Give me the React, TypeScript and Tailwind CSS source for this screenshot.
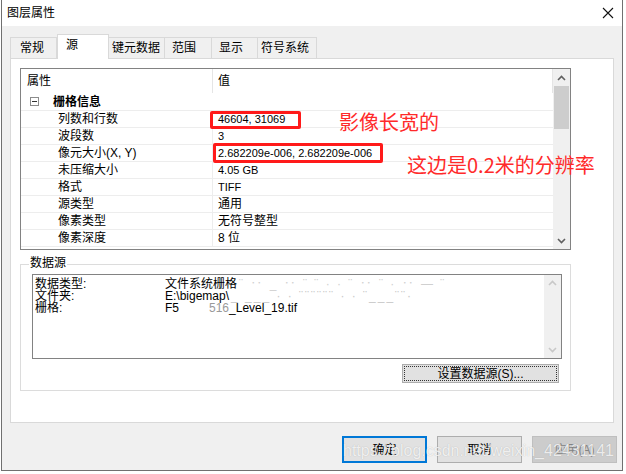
const rows: [string, string, boolean][] = [
  ["列数和行数", "46604, 31069", true],
  ["波段数", "3", true],
  ["像元大小(X, Y)", "2.682209e-006, 2.682209e-006", true],
  ["未压缩大小", "4.05 GB", true],
  ["格式", "TIFF", true],
  ["源类型", "通用", false],
  ["像素类型", "无符号整型", false],
  ["像素深度", "8 位", false],
];

const tabs = [
  { label: "常规", w: "w-[47px] pl-[9px]" },
  { label: "源", w: "w-[52px] pl-[8px]", active: true },
  { label: "键元数据", w: "w-[57px] pl-[3px]" },
  { label: "范围", w: "w-[48px] pl-[7px]" },
  { label: "显示", w: "w-[47px] pl-[7px]" },
  { label: "符号系统", w: "w-[60px] pl-[3px]" },
];

function Chevron({ up, color }: { up?: boolean; color: string }) {
  return (
    <svg width="9" height="6" viewBox="0 0 9 6">
      <polyline
        points={up ? "1,5 4.5,1.5 8,5" : "1,1 4.5,4.5 8,1"}
        fill="none"
        stroke={color}
        strokeWidth="1.6"
      />
    </svg>
  );
}

export default function App() {
  return (
    <div className="relative w-[626px] h-[474px] bg-white overflow-hidden font-['Liberation_Sans','Noto_Sans_CJK_SC',sans-serif] text-[12px] text-black">
      <div className="ml-px w-[622px] h-[471px] border-x border-b border-[#707070] flex flex-col">
        {/* title bar */}
        <div className="h-[26px] bg-white flex items-center justify-between pl-[5px] pr-[8px]">
          <span className="text-[12px] leading-none">图层属性</span>
          <svg width="12" height="12" viewBox="0 0 12 12">
            <path d="M1 1 L11 11 M11 1 L1 11" stroke="#111" strokeWidth="1.1" />
          </svg>
        </div>

        {/* body */}
        <div className="flex-1 bg-[#f0f0f0] pl-[8px] pt-[8px] flex flex-col">
          {/* tabs */}
          <div className="flex items-end h-[25px] -mb-px relative z-10">
            {tabs.map((t) =>
              t.active ? (
                <div
                  key={t.label}
                  className={`${t.w} h-[25px] bg-white border-x border-t border-[#d9d9d9] flex items-start pt-[4px] leading-none`}
                >
                  {t.label}
                </div>
              ) : (
                <div
                  key={t.label}
                  className={`${t.w} h-[22px] bg-[#f0f0f0] border border-[#d9d9d9] -ml-px first:ml-0 flex items-center leading-none`}
                >
                  {t.label}
                </div>
              )
            )}
          </div>

          {/* tab panel */}
          <div className="w-[604px] h-[365px] bg-white border border-[#d9d9d9] pl-[9px] pt-[9px]">
            {/* property grid */}
            <div className="w-[551px] h-[182px] border border-[#828282] flex">
              <div className="flex-1 flex flex-col">
                <div className="h-[24px] flex">
                  <div className="w-[192px] border-r border-[#e5e5e5] pl-[6px] flex items-center">属性</div>
                  <div className="flex-1 border-r border-[#e5e5e5] pl-[5px] flex items-center">值</div>
                </div>
                <div className="h-[17px] flex items-center pl-[9px]">
                  <div className="w-[9px] h-[9px] border border-[#8c8c8c] flex items-center justify-center">
                    <div className="w-[5px] h-px bg-[#333]" />
                  </div>
                  <span className="ml-[14px] font-bold leading-none">栅格信息</span>
                </div>
                {rows.map(([k, v, latin]) => (
                  <div key={k} className="h-[17px] flex border-t border-[#ededed]">
                    <div className="w-[192px] border-r border-[#ededed] pl-[37px] flex items-center leading-none">{k}</div>
                    <div className={`flex-1 pl-[5px] flex items-center leading-none ${latin ? "text-[11px]" : ""}`}>{v}</div>
                  </div>
                ))}
                <div className="border-t border-[#ededed]" />
              </div>
              <div className="w-[17px] bg-[#f0f0f0] flex flex-col items-center">
                <div className="h-[17px] flex items-center justify-center">
                  <Chevron up color="#606060" />
                </div>
                <div className="w-[15px] h-[43px] bg-[#cdcdcd]" />
                <div className="flex-1" />
                <div className="h-[17px] flex items-center justify-center">
                  <Chevron color="#606060" />
                </div>
              </div>
            </div>

            {/* data source group */}
            <div className="relative mt-[14px] w-[551px] h-[127px] border border-[#dcdcdc]">
              <span className="absolute -top-[8px] left-[8px] bg-white px-[1px] leading-none">数据源</span>
              <div className="ml-[11px] mt-[9px] w-[530px] h-[85px] border border-[#828282] flex">
                <div className="flex-1 pl-[2px] pt-[3px] leading-[12px]">
                  <div className="flex">
                    <span className="w-[130px]">数据类型:</span>
                    <span>文件系统栅格</span>
                    <span className="ml-[2px] text-[#d0d0d0] tracking-[2px]">¨ ‥ _ ‥ ¨ ¨ · · ¨ ‥ ¨ · ‥ — ¨</span>
                  </div>
                  <div className="flex">
                    <span className="w-[130px]">文件夹:</span>
                    <span>E:\bigemap\</span>
                    <span className="ml-[2px] text-[#c8c8c8] tracking-[2px]">_ ___ · · ¨¨¨¨¨¨ · · ¨___¨¨·</span>
                  </div>
                  <div className="flex">
                    <span className="w-[130px]">栅格:</span>
                    <span>F5</span>
                    <span className="ml-[30px] text-[#9a9a9a]">516</span>
                    <span>_Level_19.tif</span>
                  </div>
                </div>
                <div className="w-[17px] bg-[#f0f0f0] flex flex-col items-center justify-between py-[5px]">
                  <Chevron up color="#c8c8c8" />
                  <Chevron color="#c8c8c8" />
                </div>
              </div>
              <div className="ml-[381px] mt-[5px] w-[157px] h-[19px] bg-[#e1e1e1] border border-[#adadad] p-[1px]">
                <div className="w-full h-full border border-dotted border-[#333] flex items-center justify-center leading-none">
                  设置数据源(S)...
                </div>
              </div>
            </div>
          </div>

          {/* dialog buttons */}
          <div className="mt-[13px] flex justify-end gap-[10px] pr-[5px]">
            <div className="w-[85px] h-[27px] bg-[#e1e1e1] border-2 border-[#0078d7] flex items-center justify-center">确定</div>
            <div className="w-[85px] h-[27px] bg-[#e1e1e1] border border-[#adadad] flex items-center justify-center">取消</div>
            <div className="w-[85px] h-[27px] bg-[#cccccc] border border-[#bfbfbf] text-[#838383] flex items-center justify-center">应用(A)</div>
          </div>
        </div>
      </div>

      {/* red annotations */}
      <div className="absolute left-[210px] top-[111px] w-[91px] h-[18px] border-[3px] border-[#ff1a1a] rounded-[2px]" />
      <div className="absolute left-[213px] top-[143px] w-[170px] h-[20px] border-[3px] border-[#ff1a1a] rounded-[2px]" />
      <span className="absolute left-[339px] top-[110px] text-[20px] leading-[24px] text-[#ff2a2a] font-['Noto_Sans_CJK_SC',sans-serif]">影像长宽的</span>
      <span className="absolute left-[407px] top-[153px] text-[20px] leading-[24px] text-[#ff2a2a] font-['Noto_Sans_CJK_SC',sans-serif]">这边是0.2米的分辨率</span>

      {/* watermark */}
      <span className="absolute left-[343px] top-[441px] text-[16px] leading-[20px] text-white/80 font-['Liberation_Sans',sans-serif] [text-shadow:0_0_1px_rgba(0,0,0,0.25)]">
        https://blog.csdn.net/weixin_42431141
      </span>
    </div>
  );
}
